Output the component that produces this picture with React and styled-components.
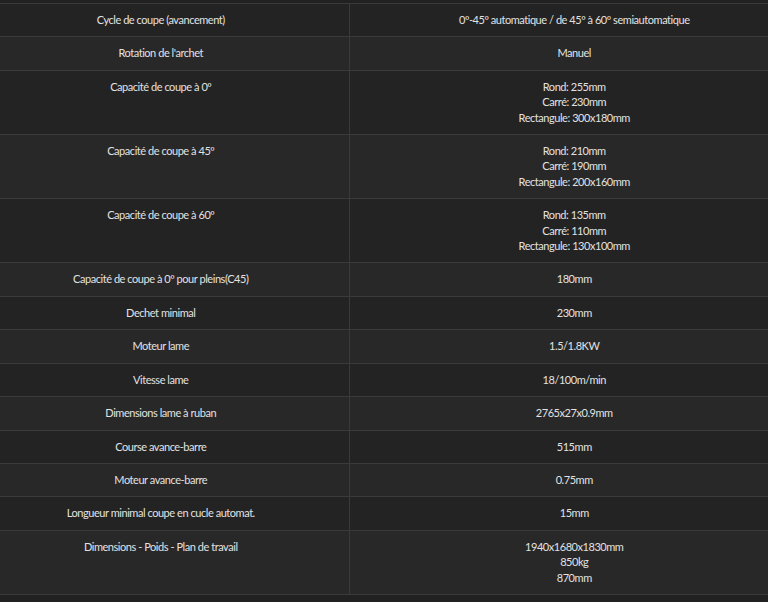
import React from "react";
import styled, { createGlobalStyle } from "styled-components";

const GlobalStyle = createGlobalStyle`
  html, body {
    margin: 0;
    padding: 0;
    background-color: #212121;
  }
  body {
    font-family: Lato, "Open Sans", sans-serif;
  }
`;

const Page = styled.div`
  width: 768px;
  overflow: hidden;
  padding-top: 3px;
  padding-bottom: 8px;
`;

const SpecTable = styled.table`
  width: 826px;
  margin-left: -27px;
  border-collapse: collapse;
  table-layout: fixed;
  border-top: 1px solid #3a3a3a;
  font-size: 11px;
  letter-spacing: -0.45px;
  color: #e2e2e2;
`;

const Row = styled.tr`
  background-color: ${(p) => (p.$odd ? "#232323" : "#282828")};
  border-bottom: 1px solid #3a3a3a;
`;

const Cell = styled.td`
  box-sizing: border-box;
  padding: 8px 10px 9px;
  line-height: 15.4px;
  text-align: center;
  vertical-align: top;
  width: ${(p) => (p.$label ? "376px" : "auto")};
  border-right: ${(p) => (p.$label ? "1px solid #3a3a3a" : "none")};
`;

const specs = [
  ["Cycle de coupe (avancement)", ["0º-45º automatique / de 45º à 60º semiautomatique"]],
  ["Rotation de l'archet", ["Manuel"]],
  ["Capacité de coupe à 0º", ["Rond: 255mm", "Carré: 230mm", "Rectangule: 300x180mm"]],
  ["Capacité de coupe à 45º", ["Rond: 210mm", "Carré: 190mm", "Rectangule: 200x160mm"]],
  ["Capacité de coupe à 60º", ["Rond: 135mm", "Carré: 110mm", "Rectangule: 130x100mm"]],
  ["Capacité de coupe à 0º pour pleins(C45)", ["180mm"]],
  ["Dechet minimal", ["230mm"]],
  ["Moteur lame", ["1.5/1.8KW"]],
  ["Vitesse lame", ["18/100m/min"]],
  ["Dimensions lame à ruban", ["2765x27x0.9mm"]],
  ["Course avance-barre", ["515mm"]],
  ["Moteur avance-barre", ["0.75mm"]],
  ["Longueur minimal coupe en cucle automat.", ["15mm"]],
  ["Dimensions - Poids - Plan de travail", ["1940x1680x1830mm", "850kg", "870mm"]],
];

const App = () => {
  return (
    <>
      <GlobalStyle />
      <Page>
        <SpecTable>
          <tbody>
            {specs.map(([label, values], i) => (
              <Row key={label} $odd={i % 2 === 0}>
                <Cell $label>{label}</Cell>
                <Cell>
                  {values.map((v, j) => (
                    <React.Fragment key={j}>
                      {j > 0 && <br />}
                      {v}
                    </React.Fragment>
                  ))}
                </Cell>
              </Row>
            ))}
          </tbody>
        </SpecTable>
      </Page>
    </>
  );
};

export default App;
